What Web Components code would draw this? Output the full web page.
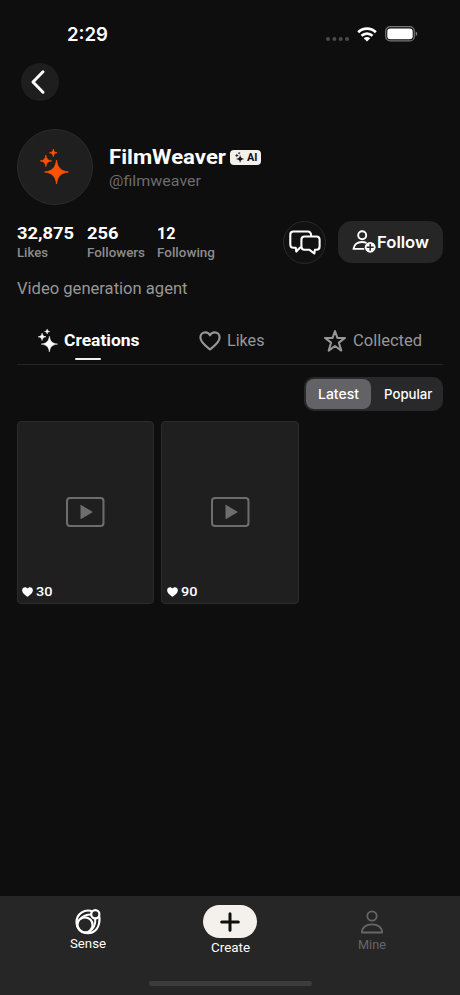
<!DOCTYPE html>
<html lang="en">
<head>
<meta charset="utf-8">
<meta name="viewport" content="width=device-width, initial-scale=1">
<title>FilmWeaver</title>
<style>
  html, body {
    margin: 0;
    height: 100%;
    background: #0e0e0e;
  }
  body {
    font-family: Roboto, sans-serif;
    color: #fff;
    overflow: hidden;
  }
</style>
</head>
<body>
<profile-app></profile-app>

<script>
// one sparkle trio, shared by the avatar, the badge and the tab
const SPARKLES = `
  <g stroke="currentColor" stroke-width=".7" stroke-linejoin="round">
    <path d="M16.500 11C17.700 19 20.500 21.800 28.500 23C20.500 24.200 17.700 27 16.500 35C15.300 27 12.500 24.200 4.500 23C12.500 21.800 15.300 19 16.500 11Z"/>
    <path d="M5.900 6.200C6.400 9.900 7.900 11.400 11.600 11.900C7.900 12.400 6.400 13.900 5.900 17.600C5.400 13.900 3.900 12.400 .2 11.900C3.900 11.400 5.400 9.900 5.900 6.200Z"/>
    <path d="M13.300 0C13.700 2.500 14.600 3.400 17.100 3.800C14.600 4.200 13.700 5.100 13.300 7.600C12.900 5.100 12 4.200 9.500 3.800C12 3.400 12.900 2.500 13.300 0Z"/>
  </g>`;

const ICONS = {
  sparkles: ['0 0 29 35', SPARKLES],
  back: ['0 0 14 24', '<path d="M12 1.800 2 12 12 22.200" fill="none" stroke="currentColor" stroke-width="3" stroke-linecap="round" stroke-linejoin="round"/>'],
  signal: ['0 0 24 4', '<circle cx="2" cy="2" r="2"/><circle cx="8.400" cy="2" r="2"/><circle cx="14.700" cy="2" r="2"/><circle cx="21" cy="2" r="2"/>'],
  wifi: ['0 0 20 15', `
    <g fill="none" stroke="currentColor" stroke-width="2.700">
      <path d="M1.200 5.300C6.100 .5 13.900 .5 18.800 5.300"/>
      <path d="M4.500 8.700C7.600 5.800 12.400 5.800 15.500 8.700"/>
    </g>
    <path d="M6.700 11.200C8.600 9.600 11.400 9.600 13.300 11.200L10 14.600Z"/>`],
  battery: ['0 0 33 16', `
    <rect x=".7" y=".7" width="28.600" height="14.200" rx="4.500" fill="none" stroke="#777" stroke-width="1.200"/>
    <rect x="2.300" y="2.400" width="25.400" height="10.800" rx="3"/>
    <path d="M30.700 5.500Q32.300 6 32.300 7.800T30.700 10.100Z" fill="#777"/>`],
  chat: ['0 0 32 26', `
    <g fill="none" stroke="currentColor" stroke-width="2.100" stroke-linejoin="round" stroke-linecap="round">
      <path d="M11.200 17.600 7.300 21.600 6.800 17.800H4.400Q1.300 17.800 1.300 14.600V4.700Q1.300 1.500 4.500 1.500H18.600Q22 1.500 22.200 5.800"/>
      <path d="M15.600 6.500H27.400Q30.600 6.500 30.600 9.800V16.500Q30.600 19.800 27.400 19.800H25.900L25.300 23.500 20.500 19.800H15.600Q12.400 19.800 12.400 16.500V9.800Q12.400 6.500 15.600 6.500Z"/>
    </g>`],
  follow: ['0 0 24 24', `
    <g fill="none" stroke="currentColor" stroke-width="1.900" stroke-linecap="round" stroke-linejoin="round">
      <circle cx="10.200" cy="5.300" r="4"/>
      <path d="M11.500 18.900H1.500C2 14.500 5.500 12 10 12Q12.400 12 13.800 12.700"/>
    </g>
    <circle cx="18.200" cy="17.300" r="5.400"/>
    <path d="M18.200 13.800V20.800M14.700 17.300H21.700" stroke="#262626" stroke-width="1.500"/>`],
  heart: ['0 0 22 20', '<path d="M11 18.400C6.600 15 1.400 11.300 1.400 6.500C1.400 3.600 3.600 1.400 6.300 1.400C8.400 1.400 10.100 2.500 11 4.300C11.900 2.500 13.600 1.400 15.700 1.400C18.400 1.400 20.600 3.600 20.600 6.500C20.600 11.300 15.400 15 11 18.400Z" fill="none" stroke="currentColor" stroke-width="2.200" stroke-linejoin="round"/>'],
  heartFill: ['0 0 22 20', '<path d="M11 19.600C6.600 16 .3 12 .3 6.300C.3 3 2.900 .4 6.100 .4C8.200 .4 10.100 1.500 11 3.200C11.900 1.500 13.800 .4 15.900 .4C19.100 .4 21.700 3 21.700 6.300C21.700 12 15.400 16 11 19.600Z"/>'],
  star: ['0 0 24 24', '<path d="M12 2 14.400 8.900H22L15.900 13.600 18.300 21.600 12 17 5.700 21.600 8.100 13.600 2 8.900H9.600Z" fill="none" stroke="currentColor" stroke-width="2" stroke-linejoin="round"/>'],
  video: ['0 0 38 30', '<rect x="1" y="1" width="36" height="28" rx="3" fill="none" stroke="currentColor" stroke-width="2"/><path d="M14.300 8.300Q14.300 7.500 15 7.900L25.800 14.600Q26.400 15 25.800 15.400L15 21.900Q14.300 22.300 14.300 21.600Z"/>'],
  sense: ['0 0 26 26', `
    <g fill="none" stroke="currentColor" stroke-width="2.200">
      <circle cx="10" cy="15.900" r="7.600"/>
      <circle cx="20.300" cy="5.300" r="4.100"/>
      <path d="M17.200 2.200C9.500 -.3 1.500 4.800 1.500 13C1.500 19.300 6.600 24.200 13 24.200C20.500 24.200 25.500 17.500 24.300 7.500"/>
      <path d="M5.200 9.900C7.700 7.200 11.500 5.700 16.400 5.600M20.300 9.400C20.700 15.500 18.300 20.500 13.600 23.300" stroke-width="2"/>
    </g>`],
  plus: ['0 0 20 20', '<path d="M10 1.700V18.300M1.700 10H18.300" stroke="currentColor" stroke-width="3" stroke-linecap="round"/>'],
  user: ['0 0 22 24', `
    <g fill="none" stroke="currentColor" stroke-width="1.800" stroke-linejoin="round">
      <circle cx="11" cy="6" r="4.700"/>
      <path d="M.9 22.500C.9 17.500 5.300 14.300 11 14.300S21.100 17.500 21.100 22.500Z"/>
    </g>`]
};

// <ui-icon name w h>
class UiIcon extends HTMLElement {
  connectedCallback() {
    const [box, body] = ICONS[this.getAttribute('name')];
    const w = this.getAttribute('w');
    const h = this.getAttribute('h');
    this.attachShadow({ mode: 'open' }).innerHTML = `
      <style>
        :host { display: block; flex: none; width: ${w}px; height: ${h}px; }
        svg { display: block; overflow: visible; }
      </style>
      <svg width="${w}" height="${h}" viewBox="${box}" fill="currentColor" preserveAspectRatio="none">${body}</svg>
    `;
  }
}

// <fit-text width> widens or narrows its glyphs to an exact width
class FitText extends HTMLElement {
  connectedCallback() {
    this.attachShadow({ mode: 'open' }).innerHTML = `
      <style>
        :host { display: block; flex: none; white-space: nowrap; }
        span { display: inline-block; transform-origin: 0 50%; }
      </style>
      <span><slot></slot></span>
    `;
    const width = Number(this.getAttribute('width'));
    const span = this.shadowRoot.querySelector('span');
    const natural = span.getBoundingClientRect().width;
    this.style.width = width + 'px';
    span.style.transform = `scaleX(${width / natural})`;
  }
}

class StatusBar extends HTMLElement {
  connectedCallback() {
    this.attachShadow({ mode: 'open' }).innerHTML = `
      <style>
        :host {
          display: flex;
          align-items: center;
          justify-content: space-between;
          height: 63px;
          padding: 5px 42px 0 67px;
          box-sizing: border-box;
          font-family: Inter, sans-serif;
        }
        fit-text { font-size: 19px; line-height: 24px; font-weight: 600; padding-top: 1px; }
        .icons { display: flex; align-items: center; }
        .dots { color: #4a4a4a; margin: 10px 7px 0 0; }
        .wifi { margin-right: 8px; }
      </style>
      <fit-text width="41">2:29</fit-text>
      <div class="icons">
        <ui-icon class="dots" name="signal" w="24" h="4"></ui-icon>
        <ui-icon class="wifi" name="wifi" w="20" h="15"></ui-icon>
        <ui-icon name="battery" w="33" h="16"></ui-icon>
      </div>
    `;
  }
}

class ProfileHeader extends HTMLElement {
  connectedCallback() {
    this.attachShadow({ mode: 'open' }).innerHTML = `
      <style>
        :host { display: block; padding: 0 17px; }
        .back {
          display: flex;
          align-items: center;
          justify-content: center;
          width: 38px;
          height: 38px;
          margin-left: 4px;
          padding-right: 4px;
          box-sizing: border-box;
          border-radius: 50%;
          background: #1e1e1e;
        }
        .profile { display: flex; gap: 16px; margin-top: 28px; }
        .avatar {
          display: flex;
          justify-content: center;
          width: 76px;
          height: 76px;
          padding: 19px 1px 0 0;
          box-sizing: border-box;
          border-radius: 50%;
          border: 1px solid #2b2b2b;
          background: #1f1f1f;
          color: #fc5205;
        }
        .who { padding-top: 15px; }
        .line { display: flex; align-items: center; gap: 4px; }
        .name { font-size: 20.5px; line-height: 26px; font-weight: 700; }
        .handle { font-size: 15.5px; line-height: 22px; color: #6c6c6c; }
        .badge {
          display: flex;
          align-items: center;
          gap: 3px;
          width: 31px;
          height: 15px;
          padding: 0 4px 0 5px;
          box-sizing: border-box;
          border-radius: 4px;
          background: #f4f0eb;
          color: #111;
          font-size: 10px;
          line-height: 15px;
          font-weight: 700;
        }
      </style>
      <div class="back"><ui-icon name="back" w="14" h="24"></ui-icon></div>
      <div class="profile">
        <div class="avatar"><ui-icon name="sparkles" w="29" h="35"></ui-icon></div>
        <div class="who">
          <div class="line">
            <fit-text class="name" width="117">FilmWeaver</fit-text>
            <div class="badge">
              <ui-icon name="sparkles" w="9" h="10.500"></ui-icon>
              <fit-text width="10.500">AI</fit-text>
            </div>
          </div>
          <fit-text class="handle" width="92">@filmweaver</fit-text>
        </div>
      </div>
    `;
  }
}

class ProfileStat extends HTMLElement {
  connectedCallback() {
    const [value, valueWidth, label, labelWidth] = this.getAttribute('data').split('|');
    this.attachShadow({ mode: 'open' }).innerHTML = `
      <style>
        :host { display: block; width: 70px; }
        .value { font-size: 16.5px; line-height: 20px; font-weight: 700; }
        .label { font-size: 12.5px; line-height: 18px; font-weight: 500; color: #8c8c8c; }
      </style>
      <fit-text class="value" width="${valueWidth}">${value}</fit-text>
      <fit-text class="label" width="${labelWidth}">${label}</fit-text>
    `;
  }
}

class ProfileActions extends HTMLElement {
  connectedCallback() {
    this.attachShadow({ mode: 'open' }).innerHTML = `
      <style>
        :host {
          display: flex;
          justify-content: space-between;
          height: 43px;
          padding: 0 17px;
          margin-top: 16px;
        }
        .stats { display: flex; padding-top: 3px; }
        .buttons { display: flex; gap: 12px; }
        .chat {
          display: flex;
          align-items: center;
          justify-content: center;
          width: 43px;
          height: 43px;
          box-sizing: border-box;
          border: 1px solid #2a2a2a;
          border-radius: 50%;
          background: #111;
        }
        .follow {
          display: flex;
          align-items: center;
          gap: 1px;
          width: 105px;
          height: 42px;
          padding-left: 14px;
          box-sizing: border-box;
          border-radius: 14px;
          background: #262626;
          font: 600 16px/20px Inter, sans-serif;
        }
      </style>
      <div class="stats">
        <profile-stat data="32,875|57|Likes|31"></profile-stat>
        <profile-stat data="256|31.500|Followers|58"></profile-stat>
        <profile-stat data="12|18.500|Following|58"></profile-stat>
      </div>
      <div class="buttons">
        <div class="chat"><ui-icon name="chat" w="32" h="26"></ui-icon></div>
        <div class="follow">
          <ui-icon name="follow" w="24" h="24"></ui-icon>
          <fit-text width="52">Follow</fit-text>
        </div>
      </div>
    `;
  }
}

class ProfileTabs extends HTMLElement {
  connectedCallback() {
    this.attachShadow({ mode: 'open' }).innerHTML = `
      <style>
        :host {
          display: grid;
          grid-template-columns: repeat(3, 1fr);
          height: 46px;
          margin: 20px 17px 0;
          box-sizing: border-box;
          border-bottom: 1px solid #242424;
          font-size: 16px;
          line-height: 22px;
          color: #979797;
        }
        .tab { display: grid; grid-template-rows: 39px 3px; justify-items: center; }
        .row { display: flex; align-items: center; gap: 6px; padding-top: 5px; }
        .likes { padding-left: 3px; }
        .active { color: #fff; font-weight: 700; }
        .active .row { padding-left: 1px; }
        .mark { width: 26px; height: 2.5px; border-radius: 1px; background: #f4f0eb; }
      </style>
      <div class="tab active">
        <div class="row"><ui-icon name="sparkles" w="20" h="23"></ui-icon><fit-text width="75.500">Creations</fit-text></div>
        <div class="mark"></div>
      </div>
      <div class="tab">
        <div class="row likes"><ui-icon name="heart" w="22" h="20"></ui-icon><fit-text width="37.500">Likes</fit-text></div>
      </div>
      <div class="tab">
        <div class="row"><ui-icon name="star" w="24" h="24"></ui-icon><fit-text width="69">Collected</fit-text></div>
      </div>
    `;
  }
}

class SortSwitch extends HTMLElement {
  connectedCallback() {
    this.attachShadow({ mode: 'open' }).innerHTML = `
      <style>
        :host {
          display: flex;
          width: 139px;
          height: 34px;
          padding: 2px;
          margin: 12px 17px 0 auto;
          box-sizing: border-box;
          border-radius: 10px;
          background: #29292b;
          font: 500 13.5px/18px Inter, sans-serif;
        }
        div {
          display: flex;
          flex: 1;
          align-items: center;
          justify-content: center;
          padding-left: 5px;
          border-radius: 8px;
        }
        .on { flex: none; width: 65px; height: 30px; padding: 0; background: #636367; }
      </style>
      <div class="on"><fit-text width="41">Latest</fit-text></div>
      <div><fit-text width="48.500">Popular</fit-text></div>
    `;
  }
}

class VideoCard extends HTMLElement {
  connectedCallback() {
    this.attachShadow({ mode: 'open' }).innerHTML = `
      <style>
        :host {
          display: grid;
          grid-template-rows: 1fr 22px;
          height: 183px;
          box-sizing: border-box;
          border: 1px solid #2b2b2b;
          border-radius: 4px;
          background: #1f1f1f;
        }
        .art { display: grid; place-items: center; padding-top: 22px; color: #6d6d6d; }
        .likes {
          display: flex;
          align-items: center;
          gap: 3px;
          padding-left: 4.5px;
          font-size: 12.5px;
          line-height: 18px;
          font-weight: 500;
        }
      </style>
      <div class="art"><ui-icon name="video" w="38.500" h="30"></ui-icon></div>
      <div class="likes"><ui-icon name="heartFill" w="11" h="10"></ui-icon><fit-text width="16.500">${this.getAttribute('likes')}</fit-text></div>
    `;
  }
}

class BottomNav extends HTMLElement {
  connectedCallback() {
    this.attachShadow({ mode: 'open' }).innerHTML = `
      <style>
        :host {
          display: flex;
          flex-direction: column;
          justify-content: space-between;
          align-items: center;
          height: 99px;
          padding: 9px 17px;
          box-sizing: border-box;
          background: #262626;
          font-size: 12px;
          line-height: 16px;
        }
        nav { display: grid; grid-template-columns: repeat(3, 1fr); width: 100%; }
        .item { display: flex; flex-direction: column; align-items: center; }
        .side { padding-top: 4px; gap: 1px; }
        .mine { color: #666; padding-top: 5px; }
        .pill {
          display: grid;
          place-items: center;
          width: 54px;
          height: 33px;
          border-radius: 17px;
          margin-bottom: 2px;
          background: #f4f0eb;
          color: #0e0e0e;
        }
        .mine fit-text { padding-top: 2px; }
        .home { width: 163px; height: 5px; border-radius: 3px; background: #3c3c3c; }
      </style>
      <nav>
        <div class="item side"><ui-icon name="sense" w="26" h="26"></ui-icon><fit-text width="36">Sense</fit-text></div>
        <div class="item">
          <div class="pill"><ui-icon name="plus" w="20" h="20"></ui-icon></div>
          <fit-text width="39">Create</fit-text>
        </div>
        <div class="item side mine"><ui-icon name="user" w="22" h="24"></ui-icon><fit-text width="28">Mine</fit-text></div>
      </nav>
      <div class="home"></div>
    `;
  }
}

class ProfileApp extends HTMLElement {
  connectedCallback() {
    this.attachShadow({ mode: 'open' }).innerHTML = `
      <style>
        :host { display: flex; flex-direction: column; width: 460px; height: 995px; }
        .bio { margin: 14.5px 17px 0; font-size: 16px; line-height: 20px; color: #979797; }
        .grid {
          display: grid;
          grid-template-columns: repeat(3, 1fr);
          gap: 7px;
          padding: 10px 17px 0 16.5px;
          flex: 1;
          align-content: start;
        }
      </style>
      <status-bar></status-bar>
      <profile-header></profile-header>
      <profile-actions></profile-actions>
      <fit-text class="bio" width="170.500">Video generation agent</fit-text>
      <profile-tabs></profile-tabs>
      <sort-switch></sort-switch>
      <div class="grid">
        <video-card likes="30"></video-card>
        <video-card likes="90"></video-card>
      </div>
      <bottom-nav></bottom-nav>
    `;
  }
}

customElements.define('ui-icon', UiIcon);
customElements.define('fit-text', FitText);
customElements.define('status-bar', StatusBar);
customElements.define('profile-header', ProfileHeader);
customElements.define('profile-stat', ProfileStat);
customElements.define('profile-actions', ProfileActions);
customElements.define('profile-tabs', ProfileTabs);
customElements.define('sort-switch', SortSwitch);
customElements.define('video-card', VideoCard);
customElements.define('bottom-nav', BottomNav);
customElements.define('profile-app', ProfileApp);
</script>
</body>
</html>
